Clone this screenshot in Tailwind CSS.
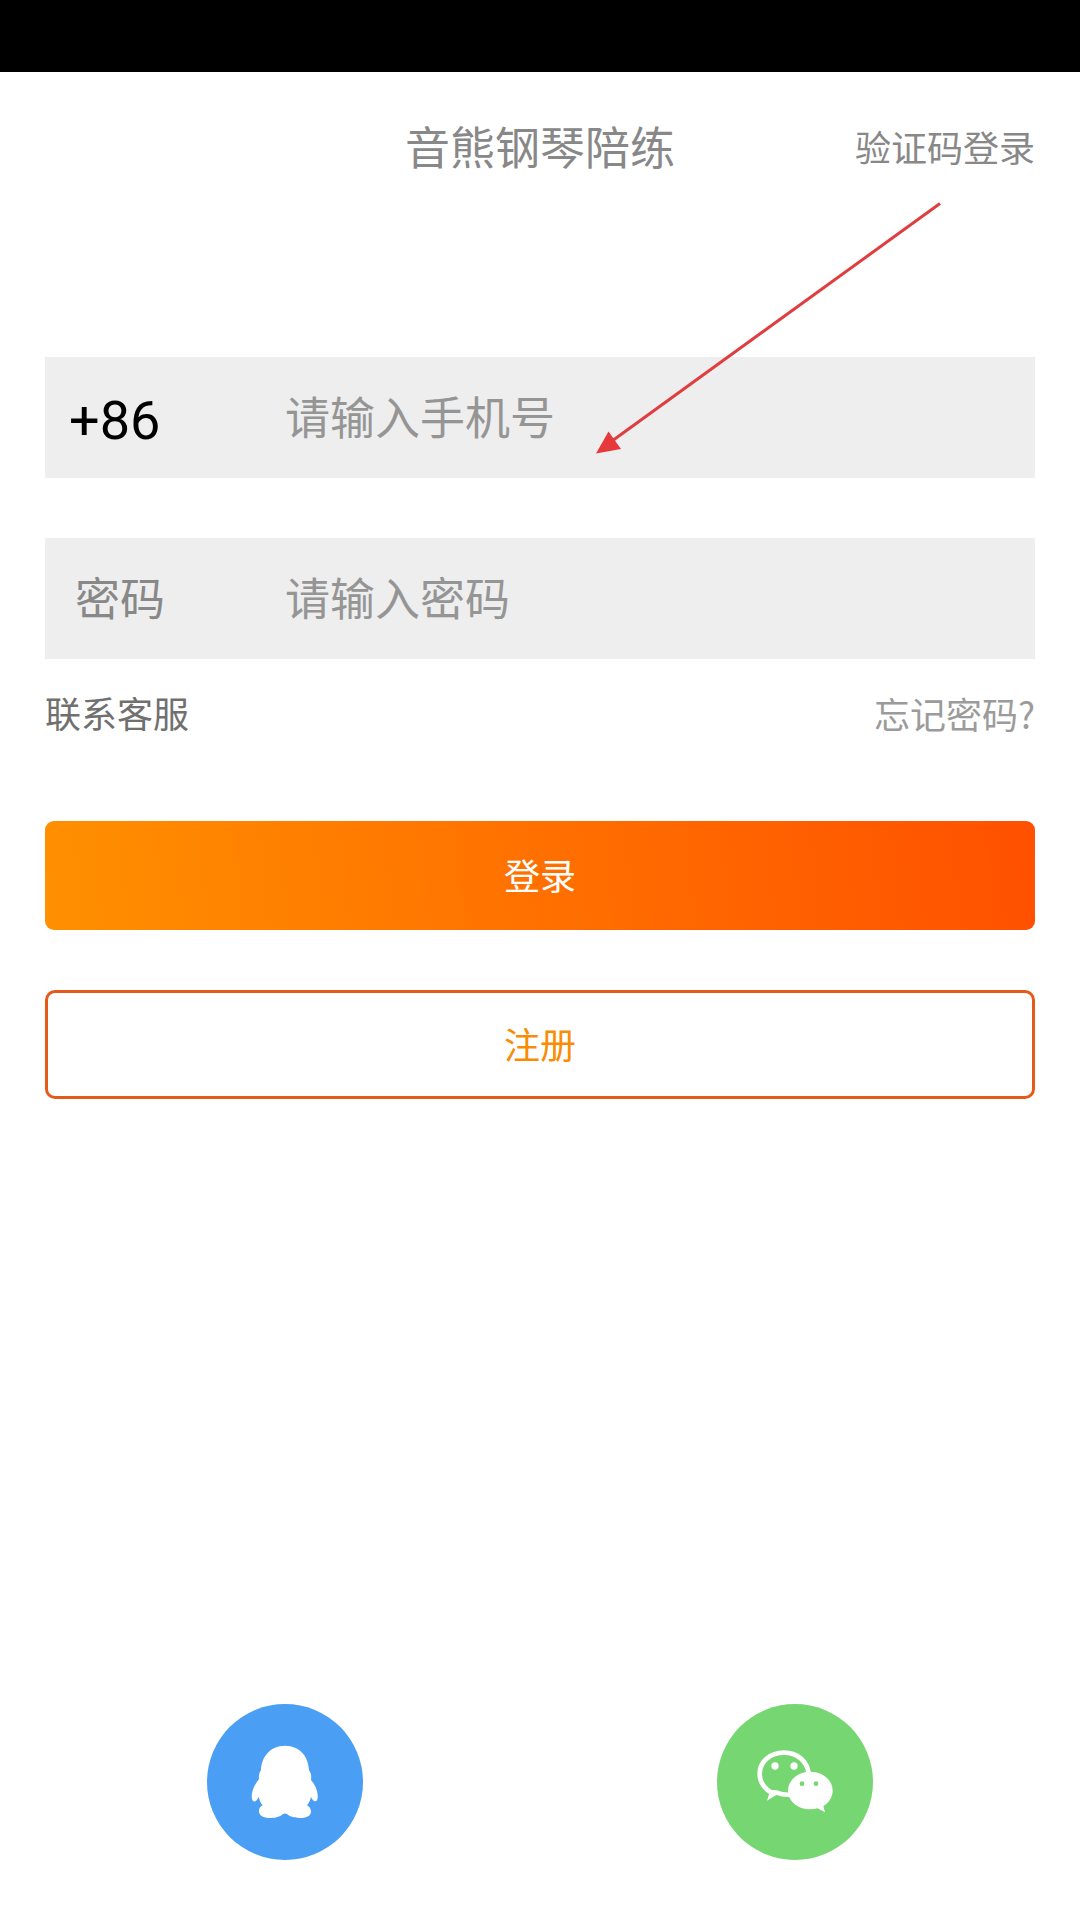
<!DOCTYPE html>
<html lang="zh-CN">
<head>
    <meta charset="UTF-8">
    <meta name="viewport" content="width=device-width, initial-scale=1.0">
    <title>音熊钢琴陪练</title>
    <script src="https://cdn.jsdelivr.net/npm/@tailwindcss/browser@4"></script>
</head>
<body class="bg-white font-['Roboto','Noto_Sans_CJK_SC',sans-serif] text-[36px] leading-none">

    <div class="relative flex flex-col w-[1080px] h-[1920px] overflow-hidden">
        <!-- Status bar -->
        <div class="h-[72px] shrink-0 bg-black"></div>

        <!-- Header -->
        <header class="grid grid-cols-3 items-center h-[151px] shrink-0 px-[45px] pt-[4px] text-[#888888]">
            <h1 class="col-start-2 text-center text-[45px] whitespace-nowrap">音熊钢琴陪练</h1>
            <a href="#" class="text-right">验证码登录</a>
        </header>

        <main class="flex flex-col px-[45px] pt-[134px]">
            <!-- Login form -->
            <div class="flex items-center h-[121px] pt-[4px] bg-[#eeeeee]">
                <span class="w-[240px] pl-[24px] pt-[2px] text-[54px] text-black">+86</span>
                <span class="text-[45px] text-[#959595]">请输入手机号</span>
            </div>
            <div class="flex items-center h-[121px] pt-[4px] mt-[60px] bg-[#eeeeee]">
                <span class="w-[240px] pl-[30px] text-[45px] text-[#888888]">密码</span>
                <span class="text-[45px] text-[#959595]">请输入密码</span>
            </div>

            <div class="flex items-center justify-between h-[110px] pt-[4px]">
                <a href="#" class="text-[#707070]">联系客服</a>
                <a href="#" class="pb-[2px] text-[#9b9b9b]">忘记密码<span class="font-['Noto_Sans_CJK_SC',sans-serif]">?</span></a>
            </div>

            <button class="h-[109px] mt-[52px] pt-[4px] rounded-[9px] bg-linear-[84deg,#ff9000,#ff5000] text-white">登录</button>
            <button class="h-[109px] mt-[60px] pt-[4px] rounded-[10px] border-3 border-[#e65a17] text-[#fa8c05]">注册</button>
        </main>

        <!-- Third-party login -->
        <footer class="flex justify-between mt-auto mb-[60px] px-[207px]">
            <a href="#" aria-label="QQ">
                <svg class="block w-[156px] h-[156px]" viewBox="51 42 468 468">
                    <circle cx="285" cy="276" r="234" fill="#4a9ff5"/>
                    <path fill="#fff" d="M285 167C240 167 214 202 213 240C207 249 206 258 207 267C194 283 185 303 185 320C186 333 191 336 196 334C201 331 204 325 206 320C208 331 212 339 218 346C210 350 206 357 207 365C208 379 225 384 242 384C261 384 271 379 278 373C283 370 287 370 292 373C299 379 310 384 329 384C347 384 363 378 363 365C363 356 358 350 351 346C357 339 361 330 363 320C366 328 370 334 376 334C382 334 384 325 383 315C382 300 375 283 363 270C365 260 363 249 357 241C356 201 330 167 285 167Z"/>
                </svg>
            </a>
            <a href="#" aria-label="微信">
                <svg class="block w-[156px] h-[156px]" viewBox="51 42 468 468">
                    <circle cx="285" cy="276" r="234" fill="#76d672"/>
                    <path fill="none" stroke="#fff" stroke-width="14" d="M326 250C321 213 292 188 252 188C210 188 179 215 179 251C179 276 192 295 215 308L230 308C243 313 257 315 272 314"/>
                    <path fill="#fff" d="M205 300L208 310L201 332L229 315L232 303Z"/>
                    <circle cx="225" cy="228" r="11" fill="#fff"/>
                    <circle cx="282" cy="228" r="11" fill="#fff"/>
                    <path fill="#fff" d="M331 245C368 245 398 270 398 302C398 321 387 338 370 348L375 367L353 355C346 357 339 358 331 358C294 358 264 333 264 302C264 270 294 245 331 245Z"/>
                    <circle cx="306" cy="281" r="7" fill="#76d672"/>
                    <circle cx="348" cy="281" r="7" fill="#76d672"/>
                </svg>
            </a>
        </footer>

        <!-- Arrow annotation -->
        <svg class="absolute left-0 top-0 w-[1080px] h-[480px] pointer-events-none" viewBox="0 0 1080 480">
            <path d="M940 203.5L612 441" stroke="#df3d3f" stroke-width="3" fill="none"/>
            <path d="M596 453.5L608.5 431.5L621 449Z" fill="#e5393c"/>
        </svg>
    </div>

</body>
</html>
